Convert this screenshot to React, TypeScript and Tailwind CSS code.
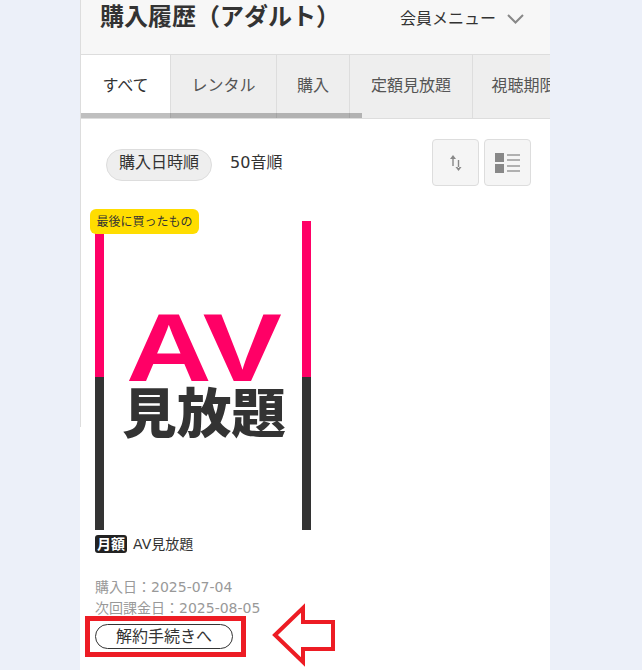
const tabs = [
  { label: 'すべて', width: 'w-[90px]', active: true },
  { label: 'レンタル', width: 'w-[106px]' },
  { label: '購入', width: 'w-[73px]' },
  { label: '定額見放題', width: 'w-[123px]' },
  { label: '視聴期限', width: 'w-[102px]' },
]

const font = "font-['DejaVu_Sans','Noto_Sans_CJK_JP',sans-serif]"

function AvLogo() {
  return (
    <svg width="216" height="309" viewBox="0 0 216 309" className="block">
      <rect width="216" height="309" fill="#fff" />
      <rect x="0" y="0" width="9" height="156" fill="#ff0066" />
      <rect x="207" y="0" width="9" height="156" fill="#ff0066" />
      <rect x="0" y="156" width="9" height="153" fill="#333" />
      <rect x="207" y="156" width="9" height="153" fill="#333" />
      <text
        x="31"
        y="160"
        fontSize="96"
        fontFamily="'Liberation Sans', sans-serif"
        fontWeight="700"
        fill="#ff0066"
        textLength="156"
        lengthAdjust="spacingAndGlyphs"
      >
        AV
      </text>
      <text
        x="27"
        y="212"
        fontSize="53"
        fontFamily="'Noto Sans CJK JP', sans-serif"
        fontWeight="900"
        fill="#333"
        textLength="164"
        lengthAdjust="spacingAndGlyphs"
      >
        見放題
      </text>
    </svg>
  )
}

export default function App() {
  return (
    <div className={`relative h-[670px] w-[642px] overflow-hidden bg-[#ecf0f9] text-[#333] ${font}`}>
      <div className="relative ml-[80px] h-full w-[470px] bg-white">
        <div className="absolute left-0 top-0 z-10 h-[427px] w-px bg-[#ddd]" />

        <header className="flex h-[55px] items-start justify-between border-b border-[#ddd] bg-[#f7f7f7] pl-5 pr-[26px]">
          <h1 className="text-[24px] font-bold leading-[35px]">購入履歴（アダルト）</h1>
          <button className="flex h-[37px] items-center gap-[11px] text-base">
            会員メニュー
            <svg width="17" height="10" viewBox="0 0 17 10" fill="none" stroke="#888" strokeWidth="2">
              <path d="M1 1l7.5 7.5L16 1" />
            </svg>
          </button>
        </header>

        <nav className="relative h-[64px] overflow-hidden border-b border-[#ddd] pl-px">
          <div className="flex h-[63px]">
            {tabs.map((tab) => (
              <div
                key={tab.label}
                className={`flex shrink-0 items-center justify-center border-r border-[#ddd] pb-[2px] text-base ${tab.width} ${
                  tab.active ? 'bg-white' : 'bg-[#eee] text-[#555]'
                }`}
              >
                {tab.label}
              </div>
            ))}
          </div>
          <div className="absolute bottom-0 left-0 h-[5px] w-[282px] bg-black/25" />
        </nav>

        <div className="flex items-center justify-between pl-[26px] pr-[19px] pt-5">
          <div className="mt-1 flex items-center gap-[18px] text-base">
            <span className="flex h-[32px] items-center rounded-full border border-[#ddd] bg-[#eee] px-3 pb-[3px]">購入日時順</span>
            <span className="pb-[3px]">50音順</span>
          </div>
          <div className="flex gap-[5px]">
            <button className="flex h-[47px] w-[47px] items-center justify-center rounded-sm border border-[#ddd] bg-[#f5f5f5]">
              <svg width="13" height="16" viewBox="0 0 13 16" fill="#888" stroke="none">
                <path d="M3.3 3h1.4v8H3.3zM1 4l3-4 3 4z" />
                <path d="M8.8 5h1.4v8H8.8zM6.5 12l3 4 3-4z" />
              </svg>
            </button>
            <button className="flex h-[47px] w-[47px] items-center justify-center rounded-sm border border-[#ddd] bg-[#f5f5f5]">
              <svg width="25" height="20" viewBox="0 0 25 20">
                <rect x="0" y="0" width="9" height="9" fill="#888" />
                <rect x="0" y="11" width="9" height="9" fill="#888" />
                <path d="M12 2h13M12 7h13M12 13h13M12 18h13" stroke="#999" strokeWidth="1.4" />
              </svg>
            </button>
          </div>
        </div>

        <div className="px-[15px] pt-[35px]">
          <div className="relative w-[216px]">
            <span className="absolute -left-[5px] -top-3 flex h-[25px] w-[109px] items-center justify-center rounded-md bg-[#ffdd00] text-xs">
              最後に買ったもの
            </span>
            <AvLogo />
          </div>
          <p className="mt-[5px] flex items-center gap-[6px] text-sm leading-[18px]">
            <span className="flex h-[18px] w-[32px] items-center justify-center rounded-[3px] bg-[#222] font-bold text-white">月額</span>
            AV見放題
          </p>
          <div className="mt-[24px] text-sm leading-[21px] text-[#999]">
            <p>購入日：2025-07-04</p>
            <p>次回課金日：2025-08-05</p>
          </div>
          <button className="mt-[5px] flex h-[25px] w-[138px] items-center justify-center rounded-full border border-[#333] text-base">
            解約手続きへ
          </button>
        </div>
      </div>

      <div className="absolute left-[85px] top-[616px] h-[41px] w-[161px] border-[5px] border-[#ed1c24]" />
      <svg width="70" height="64" viewBox="0 0 70 64" className="absolute left-[270px] top-[603px]" fill="#fff" stroke="#ed1c24" strokeWidth="4">
        <path d="M5 32L33 5v14h30v27H33v13z" />
      </svg>
    </div>
  )
}
